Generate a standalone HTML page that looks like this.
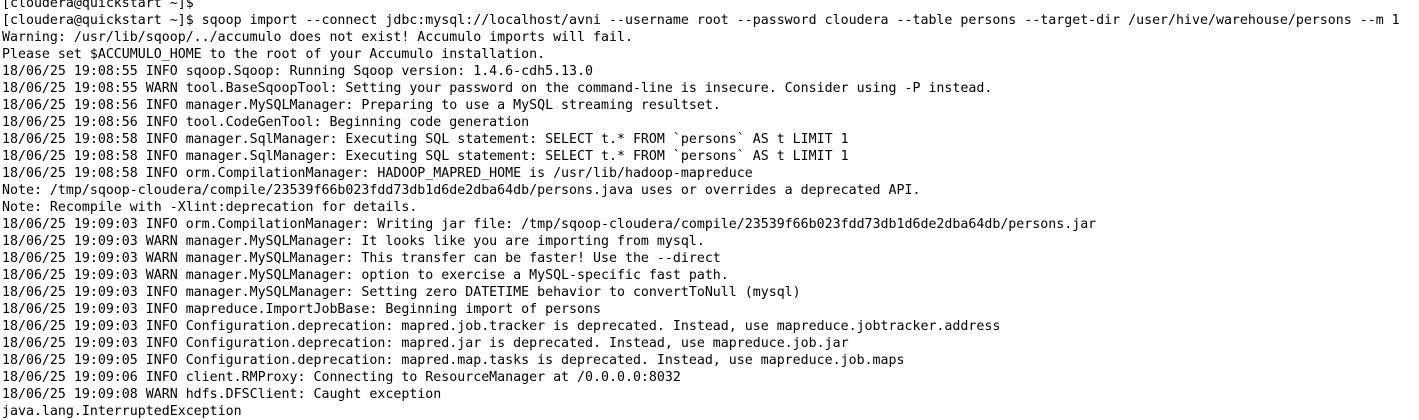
<!DOCTYPE html>
<html><head><style>
html,body{margin:0;padding:0;background:#fff;width:1419px;height:411px;overflow:hidden}
pre{margin:0;position:absolute;left:2px;top:-5px;font-family:"DejaVu Sans Mono","Liberation Mono",monospace;font-size:13.28px;line-height:17px;color:#000}
</style></head><body><pre>[cloudera@quickstart ~]$
[cloudera@quickstart ~]$ sqoop import --connect jdbc:mysql://localhost/avni --username root --password cloudera --table persons --target-dir /user/hive/warehouse/persons --m 1
Warning: /usr/lib/sqoop/../accumulo does not exist! Accumulo imports will fail.
Please set $ACCUMULO_HOME to the root of your Accumulo installation.
18/06/25 19:08:55 INFO sqoop.Sqoop: Running Sqoop version: 1.4.6-cdh5.13.0
18/06/25 19:08:55 WARN tool.BaseSqoopTool: Setting your password on the command-line is insecure. Consider using -P instead.
18/06/25 19:08:56 INFO manager.MySQLManager: Preparing to use a MySQL streaming resultset.
18/06/25 19:08:56 INFO tool.CodeGenTool: Beginning code generation
18/06/25 19:08:58 INFO manager.SqlManager: Executing SQL statement: SELECT t.* FROM `persons` AS t LIMIT 1
18/06/25 19:08:58 INFO manager.SqlManager: Executing SQL statement: SELECT t.* FROM `persons` AS t LIMIT 1
18/06/25 19:08:58 INFO orm.CompilationManager: HADOOP_MAPRED_HOME is /usr/lib/hadoop-mapreduce
Note: /tmp/sqoop-cloudera/compile/23539f66b023fdd73db1d6de2dba64db/persons.java uses or overrides a deprecated API.
Note: Recompile with -Xlint:deprecation for details.
18/06/25 19:09:03 INFO orm.CompilationManager: Writing jar file: /tmp/sqoop-cloudera/compile/23539f66b023fdd73db1d6de2dba64db/persons.jar
18/06/25 19:09:03 WARN manager.MySQLManager: It looks like you are importing from mysql.
18/06/25 19:09:03 WARN manager.MySQLManager: This transfer can be faster! Use the --direct
18/06/25 19:09:03 WARN manager.MySQLManager: option to exercise a MySQL-specific fast path.
18/06/25 19:09:03 INFO manager.MySQLManager: Setting zero DATETIME behavior to convertToNull (mysql)
18/06/25 19:09:03 INFO mapreduce.ImportJobBase: Beginning import of persons
18/06/25 19:09:03 INFO Configuration.deprecation: mapred.job.tracker is deprecated. Instead, use mapreduce.jobtracker.address
18/06/25 19:09:03 INFO Configuration.deprecation: mapred.jar is deprecated. Instead, use mapreduce.job.jar
18/06/25 19:09:05 INFO Configuration.deprecation: mapred.map.tasks is deprecated. Instead, use mapreduce.job.maps
18/06/25 19:09:06 INFO client.RMProxy: Connecting to ResourceManager at /0.0.0.0:8032
18/06/25 19:09:08 WARN hdfs.DFSClient: Caught exception
java.lang.InterruptedException
</pre></body></html>
